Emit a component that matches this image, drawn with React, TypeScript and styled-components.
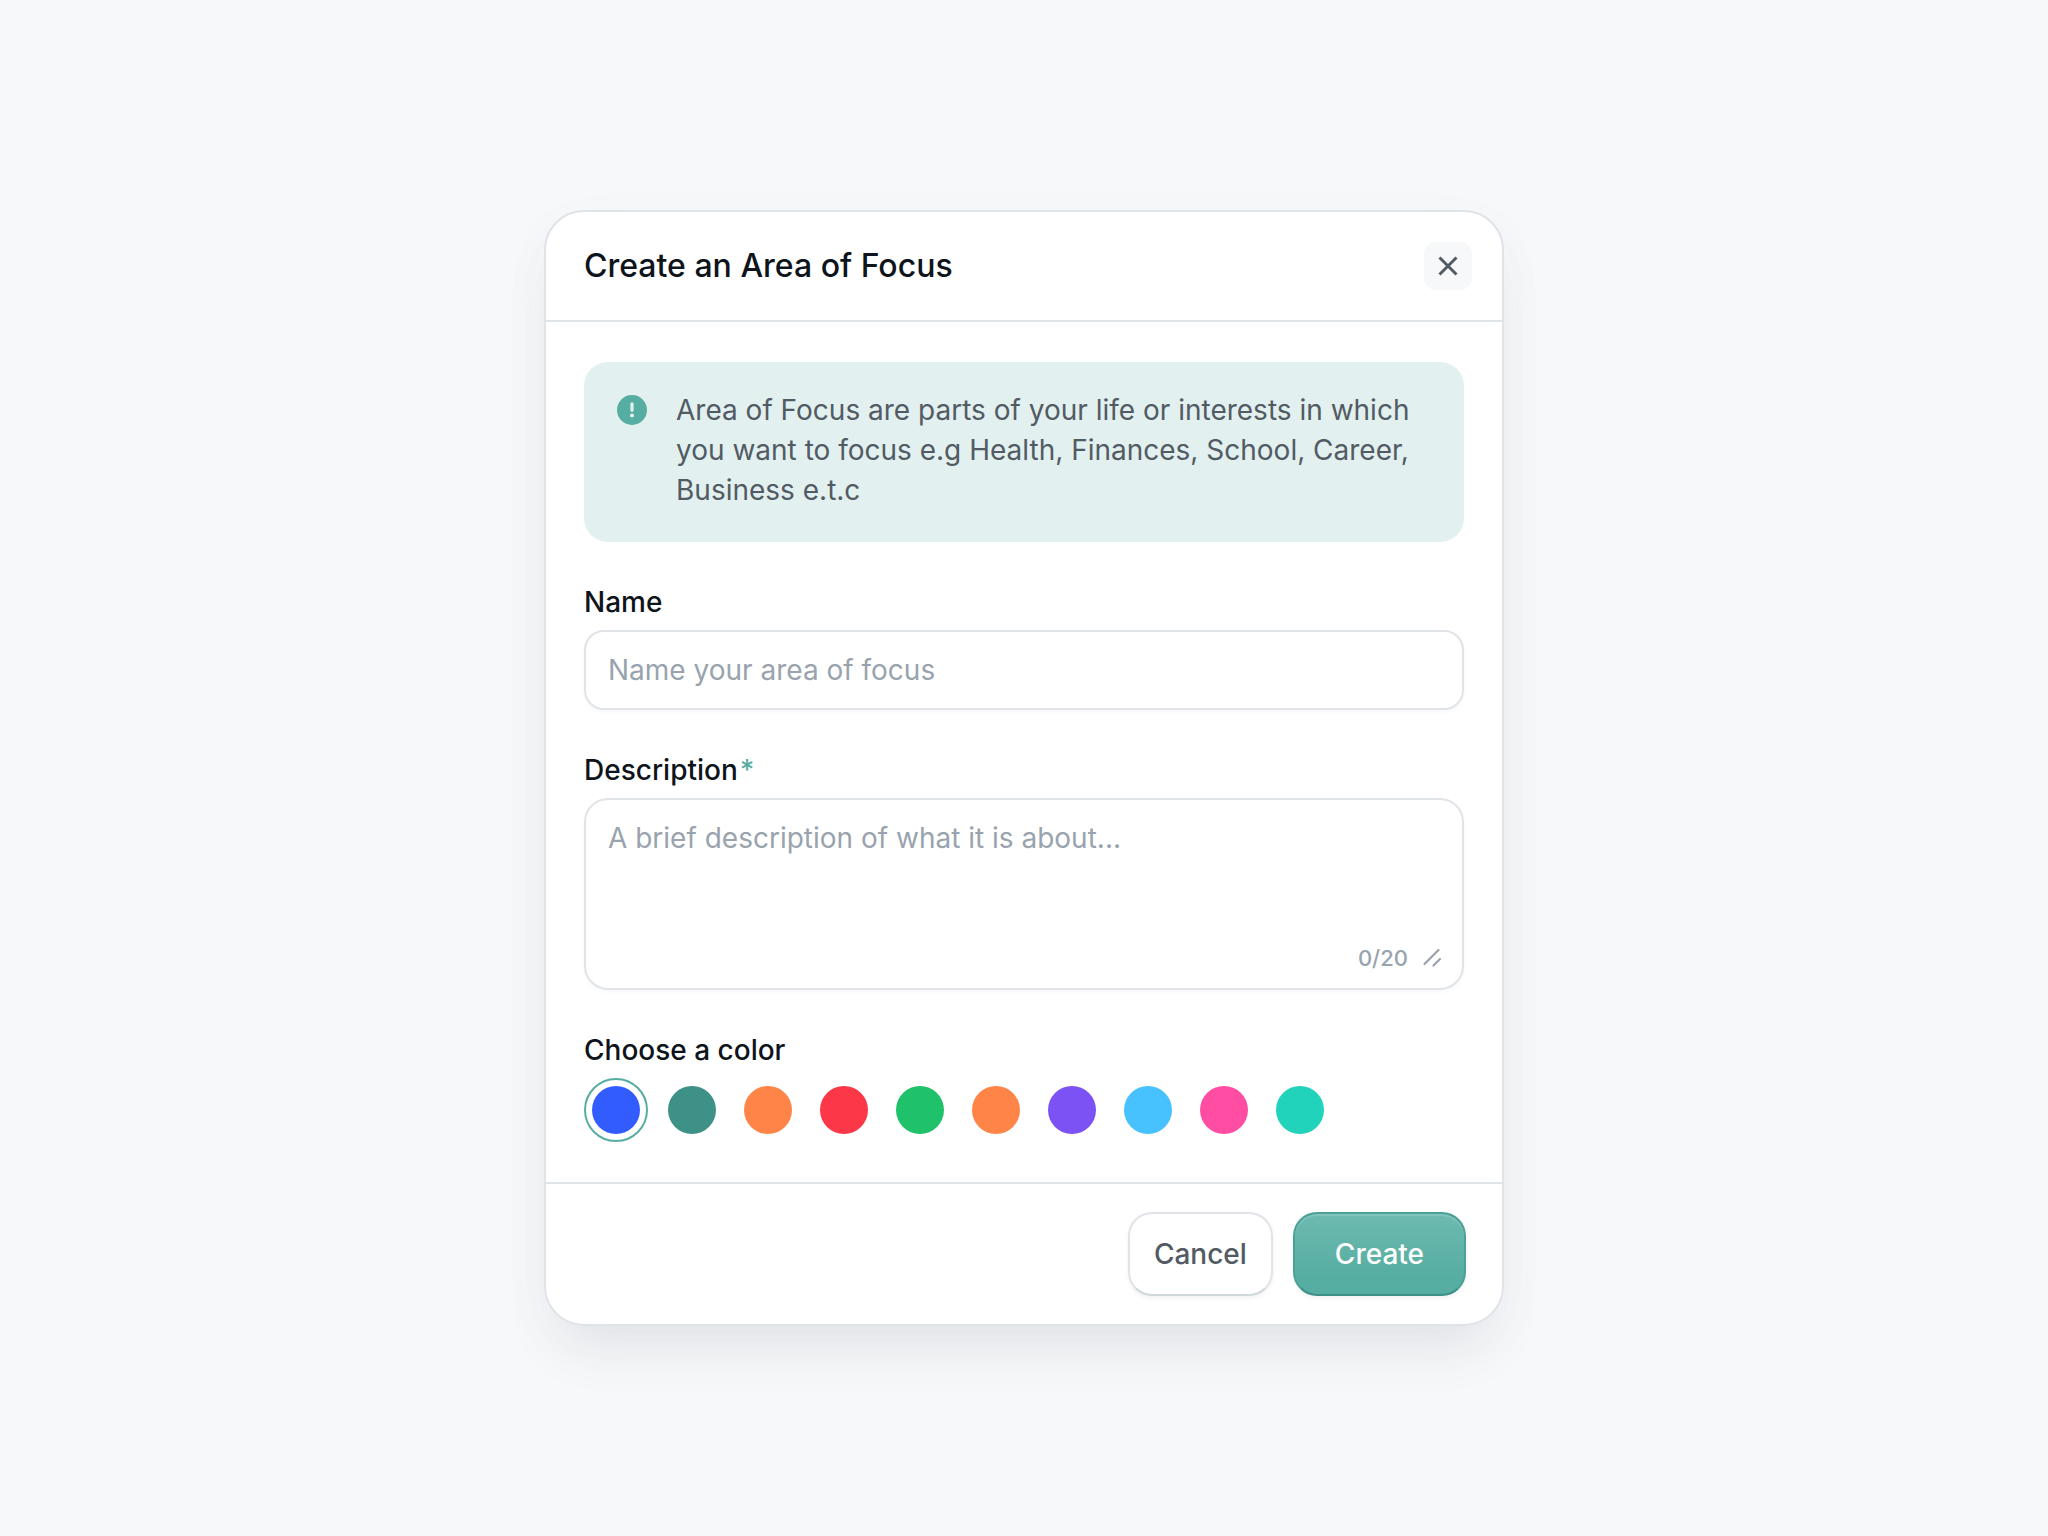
import React, { useState } from "react";
import styled, { createGlobalStyle } from "styled-components";

const color = {
  page: "#f6f8fa",
  line: "#e0e4e9",
  ink: "#0e141b",
  text: "#525b64",
  muted: "#99a3ad",
  teal: "#56ada1",
  tint: "#e2f0ef",
};

const GlobalStyle = createGlobalStyle`
  *, *::before, *::after { box-sizing: border-box; }
  body {
    margin: 0;
    background: ${color.page};
    color: ${color.ink};
    font: 400 28px/40px Inter, "Liberation Sans", sans-serif;
  }
  button, input, textarea { font: inherit; }
`;

const Page = styled.main`
  display: flex;
  align-items: center;
  justify-content: center;
  min-height: 100vh;
  padding: 40px;
`;

const Dialog = styled.form`
  width: 100%;
  max-width: 960px;
  background: #fff;
  border: 2px solid ${color.line};
  border-radius: 40px;
  box-shadow: 0 32px 56px -16px rgba(88, 92, 110, 0.12), 0 16px 56px rgba(88, 92, 110, 0.03);
`;

const Header = styled.header`
  display: flex;
  align-items: center;
  justify-content: space-between;
  padding: 30px 30px 30px 38px;
  border-bottom: 2px solid ${color.line};
`;

const Title = styled.h1`
  margin: 0;
  font-size: 32px;
  font-weight: 500;
  line-height: 48px;
`;

const CloseButton = styled.button`
  display: grid;
  place-items: center;
  width: 48px;
  height: 48px;
  padding: 0;
  border: 0;
  border-radius: 12px;
  background: ${color.page};
  color: ${color.text};
  cursor: pointer;
`;

const Body = styled.div`
  display: flex;
  flex-direction: column;
  gap: 40px;
  padding: 40px 38px;
`;

const Notice = styled.div`
  display: flex;
  align-items: flex-start;
  gap: 28px;
  padding: 28px 32px 32px;
  border-radius: 24px;
  background: ${color.tint};
  color: ${color.text};

  svg {
    flex: none;
    margin: 4px 0;
  }
`;

const NoticeText = styled.p`
  margin: 0;
`;

const Field = styled.div`
  display: flex;
  flex-direction: column;
  gap: 8px;
`;

const Label = styled.label`
  display: flex;
  gap: 2px;
  font-weight: 500;
`;

const Required = styled.span`
  color: ${color.teal};
`;

const TextInput = styled.input`
  width: 100%;
  height: 80px;
  padding: 0 22px;
  border: 2px solid ${color.line};
  border-radius: 20px;
  background: #fff;
  color: ${color.ink};
  box-shadow: 0 2px 4px rgba(10, 13, 20, 0.03);
  outline: none;

  &::placeholder { color: ${color.muted}; opacity: 1; }
  &:focus { border-color: ${color.teal}; }
`;

const AreaBox = styled.div`
  display: flex;
  flex-direction: column;
  padding: 18px 20px 10px 22px;
  border: 2px solid ${color.line};
  border-radius: 24px;
  box-shadow: 0 2px 4px rgba(10, 13, 20, 0.03);

  &:focus-within { border-color: ${color.teal}; }
`;

const TextArea = styled.textarea`
  display: block;
  width: 100%;
  height: 120px;
  padding: 0;
  border: 0;
  background: transparent;
  color: ${color.ink};
  outline: none;
  resize: none;

  &::placeholder { color: ${color.muted}; opacity: 1; }
`;

const Counter = styled.div`
  display: flex;
  align-items: center;
  justify-content: flex-end;
  gap: 14px;
  color: ${color.muted};
  font-size: 22px;
  font-weight: 500;
`;

const ColorGroup = styled.fieldset`
  min-width: 0;
  margin: 0;
  padding: 0;
  border: 0;
`;

const Legend = styled.legend`
  margin-bottom: 8px;
  padding: 0;
  font-weight: 500;
`;

const Swatches = styled.div`
  display: flex;
  flex-wrap: wrap;
  gap: 12px;
`;

const Swatch = styled.input<{ $fill: string }>`
  appearance: none;
  width: 64px;
  height: 64px;
  margin: 0;
  padding: 6px;
  border: 2px solid transparent;
  border-radius: 50%;
  background: ${(p) => p.$fill} content-box;
  cursor: pointer;

  &:checked { border-color: ${color.teal}; }
`;

const Footer = styled.footer`
  display: flex;
  justify-content: flex-end;
  gap: 20px;
  padding: 28px 36px;
  border-top: 2px solid ${color.line};
`;

const Button = styled.button`
  height: 84px;
  border-radius: 24px;
  font-weight: 500;
  cursor: pointer;
`;

const CancelButton = styled(Button)`
  padding: 0 24px;
  border: 2px solid ${color.line};
  border-bottom-color: #d0d8dc;
  background: #fff;
  color: ${color.text};
  box-shadow: 0 2px 4px rgba(10, 13, 20, 0.06);
`;

const CreateButton = styled(Button)`
  padding: 0 40px;
  border: 2px solid #4ba196;
  border-bottom-color: #3d9187;
  background: linear-gradient(#6dbab0, #56ada1 80%);
  color: #fff;
  box-shadow: inset 0 2px 1px rgba(255, 255, 255, 0.16), 0 2px 4px rgba(10, 13, 20, 0.06);
`;

const swatches = [
  { name: "Blue", value: "#335cff" },
  { name: "Pine", value: "#3d9187" },
  { name: "Orange", value: "#ff8447" },
  { name: "Red", value: "#fb3748" },
  { name: "Green", value: "#1fc16b" },
  { name: "Tangerine", value: "#ff8447" },
  { name: "Purple", value: "#7d52f4" },
  { name: "Sky", value: "#47c2ff" },
  { name: "Pink", value: "#ff4da3" },
  { name: "Turquoise", value: "#22d3bb" },
];

const limit = 20;

export default function App() {
  const [name, setName] = useState("");
  const [description, setDescription] = useState("");
  const [selected, setSelected] = useState("Blue");

  return (
    <>
      <GlobalStyle />
      <Page>
        <Dialog role="dialog" aria-labelledby="title" onSubmit={(e) => e.preventDefault()}>
          <Header>
            <Title id="title">Create an Area of Focus</Title>
            <CloseButton type="button" aria-label="Close">
              <svg width="20" height="20" viewBox="0 0 20 20" fill="none" stroke="currentColor" strokeWidth="3" aria-hidden="true">
                <path d="M1.5 1.5 18.5 18.5M18.5 1.5 1.5 18.5" />
              </svg>
            </CloseButton>
          </Header>

          <Body>
            <Notice>
              <svg width="32" height="32" viewBox="0 0 32 32" fill="none" aria-hidden="true">
                <circle cx="16" cy="16" r="15" fill={color.teal} />
                <path d="M16 9.8v6.4" stroke={color.tint} strokeWidth="3.2" strokeLinecap="round" />
                <circle cx="16" cy="21.6" r="2" fill={color.tint} />
              </svg>
              <NoticeText>
                Area of Focus are parts of your life or interests in which you want to focus e.g Health, Finances,
                School, Career, Business e.t.c
              </NoticeText>
            </Notice>

            <Field>
              <Label htmlFor="name">Name</Label>
              <TextInput
                id="name"
                placeholder="Name your area of focus"
                value={name}
                onChange={(e) => setName(e.target.value)}
              />
            </Field>

            <Field>
              <Label htmlFor="description">
                Description<Required>*</Required>
              </Label>
              <AreaBox>
                <TextArea
                  id="description"
                  placeholder="A brief description of what it is about..."
                  maxLength={limit}
                  value={description}
                  onChange={(e) => setDescription(e.target.value)}
                />
                <Counter>
                  <span>{description.length}/{limit}</span>
                  <svg width="20" height="20" viewBox="0 0 20 20" fill="none" stroke="currentColor" strokeWidth="2.2" strokeLinecap="round" aria-hidden="true">
                    <path d="M2.5 16 16.5 2M11.5 17.5 18 11" />
                  </svg>
                </Counter>
              </AreaBox>
            </Field>

            <ColorGroup>
              <Legend>Choose a color</Legend>
              <Swatches>
                {swatches.map((s) => (
                  <Swatch
                    key={s.name}
                    type="radio"
                    name="color"
                    aria-label={s.name}
                    value={s.name}
                    $fill={s.value}
                    checked={selected === s.name}
                    onChange={() => setSelected(s.name)}
                  />
                ))}
              </Swatches>
            </ColorGroup>
          </Body>

          <Footer>
            <CancelButton type="button">Cancel</CancelButton>
            <CreateButton type="submit">Create</CreateButton>
          </Footer>
        </Dialog>
      </Page>
    </>
  );
}
